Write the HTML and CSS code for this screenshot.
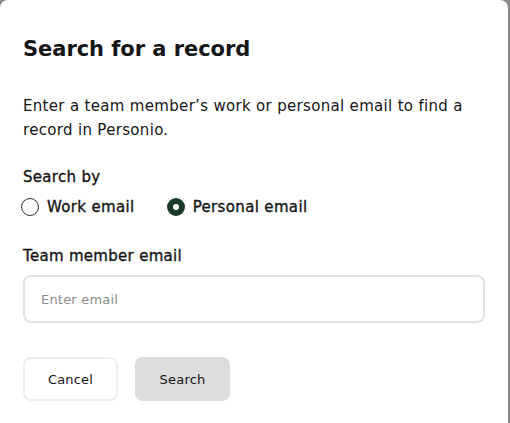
FILE: index.html
```html
<!DOCTYPE html>
<html>
<head>
<meta charset="utf-8">
<link rel="stylesheet" href="styles.css">
</head>
<body>
<div class="dialog">
  <h1 class="title">Search for a record</h1>
  <p class="desc">Enter a team member’s work or personal email to find a record in Personio.</p>
  <div class="field">
    <div class="label">Search by</div>
    <div class="radios">
      <label class="radio"><span class="dot"></span>Work email</label>
      <label class="radio"><span class="dot checked"></span>Personal email</label>
    </div>
  </div>
  <div class="field field-email">
    <div class="label">Team member email</div>
    <div class="input">Enter email</div>
  </div>
  <div class="actions">
    <button class="btn cancel">Cancel</button>
    <button class="btn search">Search</button>
  </div>
</div>
</body>
</html>
```
FILE: styles.css
```css
html, body {
  margin: 0;
  padding: 0;
  background: #8a8a8a;
  height: 100%;
  overflow: hidden;
}
body {
  font-family: "DejaVu Sans", sans-serif;
  color: #161616;
}
.dialog {
  background: #fff;
  width: 508px;
  height: 440px;
  border-radius: 8px;
  box-sizing: border-box;
  padding: 35px 23px 0 23px;
}
.title {
  margin: 0;
  font-size: 21px;
  font-weight: 700;
  line-height: 28px;
  letter-spacing: -0.05px;
}
.desc {
  margin: 31px 0 0 0;
  font-size: 15px;
  line-height: 24px;
  width: 460px;
  letter-spacing: 0.32px;
}
.field {
  margin-top: 24px;
}
.field-email {
  margin-top: 27px;
}
.label {
  font-size: 15px;
  line-height: 22px;
  letter-spacing: 0.3px;
  -webkit-text-stroke: 0.35px #161616;
}
.radios {
  display: flex;
  gap: 32px;
  margin-top: 8px;
  margin-left: -2px;
}
.radio {
  display: flex;
  align-items: center;
  gap: 8px;
  font-size: 15px;
  line-height: 22px;
  letter-spacing: 0.35px;
  -webkit-text-stroke: 0.35px #161616;
}
.dot {
  width: 18px;
  height: 18px;
  box-sizing: border-box;
  border-radius: 50%;
  border: 1.5px solid #333;
}
.dot.checked {
  border: 6.5px solid #1a3a2b;
  background: #fff;
}
.input {
  margin-top: 8px;
  height: 48px;
  box-sizing: border-box;
  border: 2px solid #e2e2e2;
  border-radius: 8px;
  padding: 0 16px;
  display: flex;
  align-items: center;
  font-size: 13px;
  color: #8c8c8c;
  letter-spacing: 0.2px;
  width: 462px;
}
.actions {
  display: flex;
  gap: 17px;
  margin-top: 34px;
}
.btn {
  width: 95px;
  height: 44px;
  border-radius: 8px;
  font-family: "DejaVu Sans", sans-serif;
  font-size: 13px;
  letter-spacing: 0.2px;
  color: #161616;
  box-sizing: border-box;
  cursor: pointer;
}
.cancel {
  background: #fff;
  border: 2px solid #efefef;
}
.search {
  background: #dcdcdc;
  border: none;
}
```
